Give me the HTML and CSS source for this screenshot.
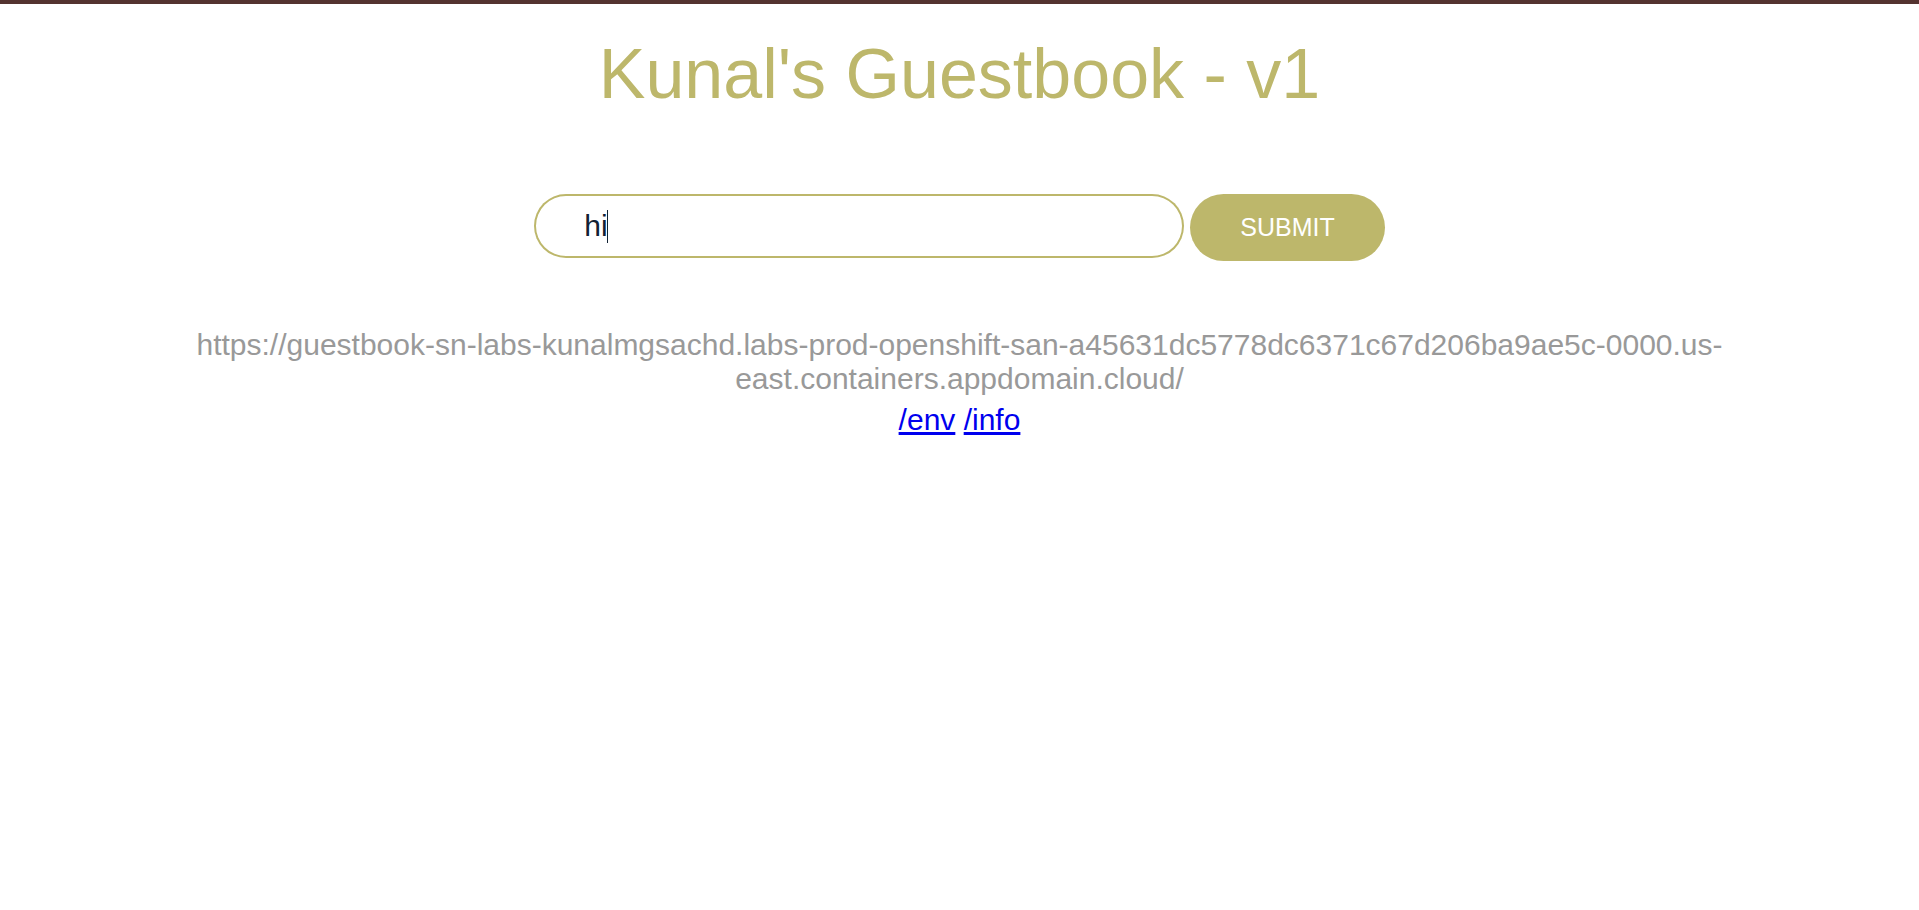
FILE: index.html
```html
<!DOCTYPE html>
<html lang="en">
<head>
<meta charset="utf-8">
<title>Kunal's Guestbook - v1</title>
<link rel="stylesheet" href="styles.css">
</head>
<body>
<div class="topbar"></div>
<main class="container">
  <h1 class="title">Kunal's Guestbook - v1</h1>
  <form class="guest-form" onsubmit="return false;">
    <span class="entry-wrap">
      <input class="entry" type="text" value="hi" autocomplete="off">
      <span class="caret"></span>
    </span>
    <a href="#" class="submit">Submit</a>
  </form>
  <h2 class="host">https://guestbook-sn-labs-kunalmgsachd.labs-prod-openshift-san-a45631dc5778dc6371c67d206ba9ae5c-0000.us-east.containers.appdomain.cloud/</h2>
  <p class="links"><a href="/env">/env</a> <a href="/info">/info</a></p>
</main>
</body>
</html>
```
FILE: styles.css
```css
html, body {
  margin: 0;
  padding: 0;
  background: #ffffff;
}

body {
  font-family: "Liberation Sans", Arial, sans-serif;
  color: #112233;
}

.topbar {
  height: 4px;
  background: #543330;
}

.container {
  padding: 30px 10px 20px;
  text-align: center;
}

.title {
  margin: 0;
  font-size: 70px;
  font-weight: normal;
  line-height: normal;
  color: #BDB76B;
}

.guest-form {
  margin: 80px auto 0;
  display: flex;
  justify-content: center;
  align-items: flex-start;
  gap: 6px;
}

.entry-wrap {
  position: relative;
  display: block;
}

.entry {
  display: block;
  box-sizing: content-box;
  width: 550px;
  padding: 15px 50px;
  border: 0;
  border-radius: 1000px;
  box-shadow: inset 0 0 0 2px #BDB76B;
  font-family: "Liberation Sans", Arial, sans-serif;
  font-size: 30px;
  line-height: normal;
  color: #112233;
  caret-color: transparent;
  outline: none;
  background: #ffffff;
  margin: 0;
}

.caret {
  position: absolute;
  left: 73px;
  top: 16px;
  width: 1px;
  height: 33px;
  background: #112233;
}

.submit {
  display: inline-block;
  background: #BDB76B;
  border-radius: 1000px;
  color: #ffffff;
  font-size: 25px;
  line-height: normal;
  padding: 18.75px 50px;
  text-decoration: none;
  text-transform: uppercase;
}

.host {
  margin: 67px 0 0;
  font-size: 30px;
  font-weight: normal;
  line-height: normal;
  color: #999999;
}

.links {
  margin: 7px 0 0;
  font-size: 30px;
  line-height: normal;
}

.links a {
  color: #0000EE;
}
```
